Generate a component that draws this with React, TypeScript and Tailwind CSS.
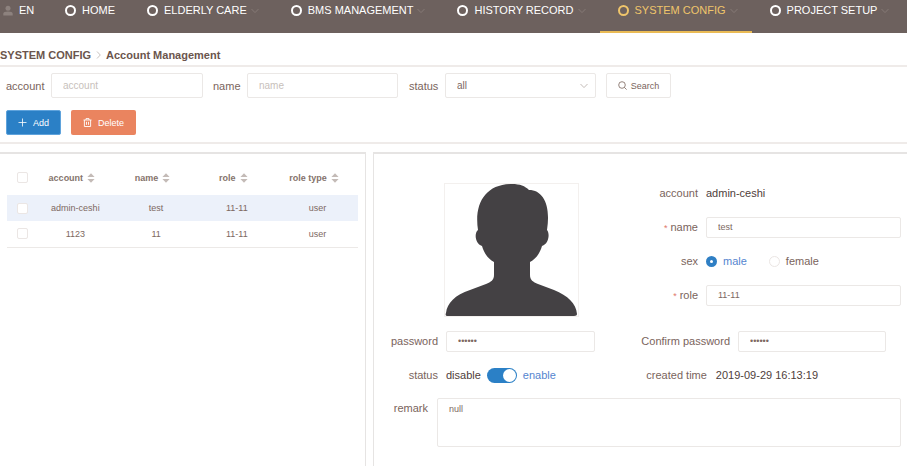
import { useState } from "react";
import type { ReactNode } from "react";

const navItems = [
  { label: "HOME", menu: false },
  { label: "ELDERLY CARE", menu: true },
  { label: "BMS MANAGEMENT", menu: true },
  { label: "HISTORY RECORD", menu: true },
  { label: "SYSTEM CONFIG", menu: true, active: true },
  { label: "PROJECT SETUP", menu: true },
];

const columns = ["account", "name", "role", "role type"];

const accounts = [
  { account: "admin-ceshi", name: "test", role: "11-11", type: "user" },
  { account: "1123", name: "11", role: "11-11", type: "user" },
];

const fieldClass =
  "min-w-0 rounded-[2px] border border-[#ebe8e6] bg-white text-[#7d6861] outline-none";

function Chevron({ className }: { className: string }) {
  return (
    <svg viewBox="0 0 8 6" className={className} fill="none" stroke="currentColor">
      <path d="M0.5 1 L4 4.6 L7.5 1" />
    </svg>
  );
}

function SortIcon() {
  return (
    <svg viewBox="0 0 8 10" className="h-[10px] w-2 shrink-0" fill="#c4bbb7">
      <path d="M4 0.3 L7.6 4 H0.4 Z M4 9.7 L7.6 6 H0.4 Z" />
    </svg>
  );
}

function NavBar() {
  return (
    <header className="flex h-[33px] shrink-0 overflow-hidden bg-[#6d615e] text-[11px] leading-[21px] text-white">
      <button type="button" className="flex h-[21px] w-[47px] shrink-0 items-center gap-[6px] pl-[3px]">
        <svg viewBox="0 0 10 10" className="h-[11px] w-[10px]" fill="#8d827e">
          <circle cx="5" cy="2.8" r="2.5" />
          <path d="M0.3 10 V8.3 C0.3 6.7 2 6 5 6 S9.7 6.7 9.7 8.3 V10 Z" />
        </svg>
        EN
      </button>
      <nav className="flex">
        {navItems.map((item) => (
          <a
            key={item.label}
            href="#"
            className={`flex h-[33px] shrink-0 items-start border-b-2 pr-[14px] pl-[18px] whitespace-nowrap ${
              item.active ? "border-[#eabb55] text-[#efc56b]" : "border-transparent"
            }`}
          >
            <span className="flex h-[21px] items-center">
              <span className="mr-[6px] size-[11px] rounded-full border-2 border-current" />
              {item.label}
              {item.menu && <Chevron className="ml-1 h-[6px] w-2 text-[#857a76]" />}
            </span>
          </a>
        ))}
      </nav>
    </header>
  );
}

function Filters() {
  return (
    <section className="border-b-2 border-[#efebe9] pt-[6px] pb-[7px] pl-[6px]">
      <form className="flex items-center text-[11px]" onSubmit={(e) => e.preventDefault()}>
        <label htmlFor="f-account" className="w-[45px]">account</label>
        <input
          id="f-account"
          placeholder="account"
          className={`${fieldClass} mr-[10px] h-[25px] w-[152px] px-[11px] text-[10px] placeholder:text-[#c8bfbb]`}
        />
        <label htmlFor="f-name" className="w-[34px]">name</label>
        <input
          id="f-name"
          placeholder="name"
          className={`${fieldClass} mr-[11px] h-[25px] w-[151px] px-[11px] text-[10px] placeholder:text-[#c8bfbb]`}
        />
        <label htmlFor="f-status" className="w-[36px]">status</label>
        <div className="relative mr-[10px] w-[151px]">
          <select
            id="f-status"
            className={`${fieldClass} block h-[25px] w-full appearance-none px-[11px] text-[10px]`}
          >
            <option>all</option>
          </select>
          <Chevron className="pointer-events-none absolute top-[10px] right-2 h-[6px] w-2 text-[#c4bcb8]" />
        </div>
        <button
          type="submit"
          className="flex h-[25px] w-[65px] items-center justify-center gap-[4px] rounded-[2px] border border-[#ebe8e6] text-[9px]"
        >
          <svg viewBox="0 0 9 9" className="size-[9px]" fill="none" stroke="currentColor" strokeWidth="0.8">
            <circle cx="4" cy="4" r="3.3" />
            <path d="M6.4 6.4 L8.6 8.6" />
          </svg>
          Search
        </button>
      </form>
      <div className="mt-3 flex gap-[10px] text-[9px] text-white">
        <button
          type="button"
          className="flex h-[25px] w-[55px] items-center justify-center gap-[6px] rounded-[2px] border border-[#5fa3dc] bg-[#2b80c6]"
        >
          <svg viewBox="0 0 9 9" className="size-[9px]" stroke="currentColor" strokeWidth="0.8">
            <path d="M4.5 0.5 V8.5 M0.5 4.5 H8.5" />
          </svg>
          Add
        </button>
        <button
          type="button"
          className="flex h-[25px] w-[65px] items-center justify-center gap-[6px] rounded-[2px] bg-[#ea845f]"
        >
          <svg viewBox="0 0 9 9" className="size-[9px]" fill="none" stroke="currentColor" strokeWidth="0.9">
            <path d="M0.5 2 H8.5 M3 2 V0.6 H6 V2 M1.4 2 V8.5 H7.6 V2 M3.5 3.8 V6.8 M5.5 3.8 V6.8" />
          </svg>
          Delete
        </button>
      </div>
    </section>
  );
}

function Check({ label }: { label: string }) {
  return (
    <input
      type="checkbox"
      aria-label={label}
      className="ml-[2px] block size-[11px] appearance-none rounded-[2px] border border-[#ebe6e4] bg-white checked:bg-[#2b80c6]"
    />
  );
}

function AccountTable() {
  return (
    <section className="w-[366px] shrink-0 border-t-2 border-r border-[#e6e4e3] px-[7px] pt-[6px]">
      <table className="w-full table-fixed text-center text-[9px] text-[#7d6861]">
        <thead>
          <tr className="h-[35px]">
            <th className="w-7 pl-[8px]"><Check label="select all" /></th>
            {columns.map((name) => (
              <th key={name} className="pr-[7px] font-bold text-[#85736c]">
                <button type="button" className="inline-flex items-center gap-[4px] align-middle whitespace-nowrap">
                  {name}
                  <SortIcon />
                </button>
              </th>
            ))}
          </tr>
        </thead>
        <tbody>
          {accounts.map((row, i) => (
            <tr key={row.account} className={i === 0 ? "h-[26px] bg-[#ecf1fa]" : "h-[26px] border-b border-[#ece9e7]"}>
              <td className="pl-[8px]"><Check label={`select ${row.account}`} /></td>
              <td>{row.account}</td>
              <td>{row.name}</td>
              <td>{row.role}</td>
              <td>{row.type}</td>
            </tr>
          ))}
        </tbody>
      </table>
    </section>
  );
}

function Avatar() {
  return (
    <div className="mt-[7px] ml-[70px] h-[134px] w-[135px] border border-[#f3f0ee]">
      <svg viewBox="0 0 133 132" className="size-full" fill="#444144" role="img" aria-label="avatar">
        <path d="M49 78 C43 75 39 69 37 62 C30 60 29 49 33 46 C29 20 40 0 67 0 C75 0 80 2 84 6 C98 6 106 21 102 46 C105 49 104 60 97 62 C95 69 91 75 85 78 V91 C85 96 88 98 93 100 L109 106 C123 112 131 119 132 130 C132 131 131 132 129 132 H3 C1 132 0 131 1 129 C2 119 10 111 25 106 L41 100 C46 98 49 96 49 91 Z" />
      </svg>
    </div>
  );
}

function Row({ label, id, required, children }: { label: string; id?: string; required?: boolean; children: ReactNode }) {
  const text = (
    <>
      {required && <span className="mr-[3px] text-[9px] text-[#e0786a]">*</span>}
      {label}
    </>
  );
  return (
    <div className="flex h-[34px] items-center">
      {id ? (
        <label htmlFor={id} className="mr-2 w-[60px] shrink-0 text-right">{text}</label>
      ) : (
        <span className="mr-2 w-[60px] shrink-0 text-right">{text}</span>
      )}
      {children}
    </div>
  );
}

function Details() {
  const [sex, setSex] = useState("male");
  const [enabled, setEnabled] = useState(true);
  const radio =
    "mr-[6px] size-[11px] appearance-none rounded-full border border-[#ebe6e4] bg-white checked:border-4 checked:border-[#2f7fc4]";
  return (
    <section className="min-w-0 flex-1 border-t-2 border-l border-[#e6e4e3] pt-[22px] pr-[6px] text-[11px]">
      <div className="flex">
        <div className="w-[264px] shrink-0"><Avatar /></div>
        <div className="min-w-0 flex-1">
          <Row label="account"><span className="text-[#4f403b]">admin-ceshi</span></Row>
          <Row label="name" id="d-name" required>
            <input id="d-name" defaultValue="test" className={`${fieldClass} h-[21px] flex-1 px-[11px] text-[9px]`} />
          </Row>
          <Row label="sex">
            <label className={`mr-[22px] flex items-center ${sex === "male" ? "text-[#5585cf]" : ""}`}>
              <input type="radio" name="sex" checked={sex === "male"} onChange={() => setSex("male")} className={radio} />
              male
            </label>
            <label className={`flex items-center ${sex === "female" ? "text-[#5585cf]" : ""}`}>
              <input type="radio" name="sex" checked={sex === "female"} onChange={() => setSex("female")} className={radio} />
              female
            </label>
          </Row>
          <Row label="role" id="d-role" required>
            <input id="d-role" defaultValue="11-11" className={`${fieldClass} h-[21px] flex-1 px-[11px] text-[9px]`} />
          </Row>
        </div>
      </div>
      <div className="mt-[7px] flex h-[34px] items-center">
        <label htmlFor="d-pass" className="mr-2 w-[64px] text-right">password</label>
        <input id="d-pass" type="password" defaultValue="123456" className={`${fieldClass} h-[21px] w-[149px] px-[11px] text-[9px]`} />
        <label htmlFor="d-confirm" className="mr-2 w-[135px] text-right">Confirm password</label>
        <input id="d-confirm" type="password" defaultValue="123456" className={`${fieldClass} mr-[15px] h-[21px] flex-1 px-[11px] text-[9px]`} />
      </div>
      <div className="flex h-[34px] items-center">
        <label htmlFor="d-status" className="mr-2 w-[64px] text-right">status</label>
        <span className="text-[#4f403b]">disable</span>
        <label className="mx-[6px] flex">
          <input
            id="d-status"
            type="checkbox"
            role="switch"
            checked={enabled}
            onChange={(e) => setEnabled(e.target.checked)}
            className="flex h-[15px] w-[30px] appearance-none items-center rounded-full bg-[#c9c2be] p-px before:size-[13px] before:rounded-full before:bg-white checked:justify-end checked:bg-[#2b80c6]"
          />
        </label>
        <span className="w-[92px] text-[#5585cf]">enable</span>
        <span className="mr-[9px] w-[92px] text-right">created time</span>
        <span className="whitespace-nowrap text-[#4f403b]">2019-09-29 16:13:19</span>
      </div>
      <div className="mt-[6px] flex">
        <label htmlFor="d-remark" className="mr-[9px] w-[54px] pt-[2px] text-right">remark</label>
        <textarea
          id="d-remark"
          defaultValue="null"
          className={`${fieldClass} h-[49px] flex-1 resize-none px-[11px] py-[4px] text-[9px] leading-[13px]`}
        />
      </div>
    </section>
  );
}

export default function App() {
  return (
    <div className="flex min-h-screen flex-col bg-white font-['Liberation_Sans',Arial,sans-serif] text-[11px] leading-4 text-[#7a645c]">
      <NavBar />
      <div className="flex h-[34px] shrink-0 items-end border-b-2 border-[#efebe9] pb-[2px] font-bold text-[#6b554d]">
        <a href="#">SYSTEM CONFIG</a>
        <svg viewBox="0 0 5 8" className="mx-[5px] mb-1 h-2 w-[5px]" fill="none" stroke="#c9c2be">
          <path d="M1 0.5 L4.3 4 L1 7.5" />
        </svg>
        <span>Account Management</span>
      </div>
      <Filters />
      <main className="mt-2 flex flex-1 gap-[7px]">
        <AccountTable />
        <Details />
      </main>
    </div>
  );
}
